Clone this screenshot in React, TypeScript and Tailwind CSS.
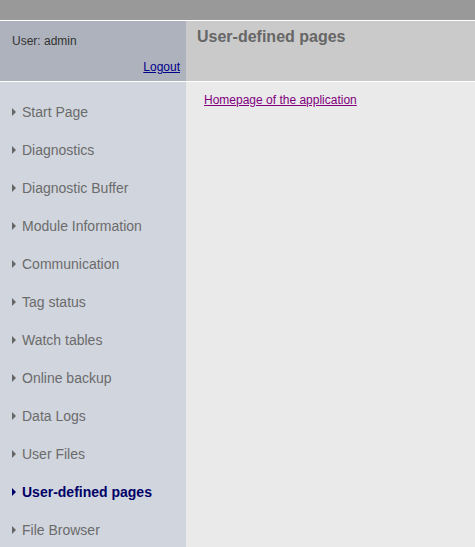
const items = [
  "Start Page",
  "Diagnostics",
  "Diagnostic Buffer",
  "Module Information",
  "Communication",
  "Tag status",
  "Watch tables",
  "Online backup",
  "Data Logs",
  "User Files",
  "User-defined pages",
  "File Browser",
];

const active = "User-defined pages";

function NavItem({ label }: { label: string }) {
  const isActive = label === active;
  return (
    <div className="flex items-center h-[38px] pl-[12px]">
      <span
        className={`w-0 h-0 border-y-[4px] border-y-transparent border-l-[4px] ${
          isActive ? "border-l-[#000066]" : "border-l-[#666666]"
        }`}
      />
      <a
        href="#"
        className={`ml-[6px] text-[14px] leading-[38px] ${
          isActive ? "text-[#000066] font-bold" : "text-[#6b6b6b]"
        }`}
      >
        {label}
      </a>
    </div>
  );
}

export default function App() {
  return (
    <div
      className="w-[475px] h-[547px] flex flex-col overflow-hidden bg-[#eaeaea]"
      style={{ fontFamily: '"Liberation Sans", Arial, sans-serif' }}
    >
      <div className="h-[21px] shrink-0 bg-[#999999] border-b border-white" />
      <div className="flex flex-1 min-h-0">
        <aside className="w-[186px] shrink-0 flex flex-col bg-[#d1d5de]">
          <div className="h-[61px] shrink-0 flex flex-col justify-between bg-[#aeb2bc] border-b border-white pt-[13px] pb-[3px] pl-[12px] pr-[6px]">
            <div className="text-[12px] leading-[14px] text-[#333333]">User: admin</div>
            <div className="text-right">
              <a href="#" className="text-[12px] leading-[14px] text-[#00008b] underline">
                Logout
              </a>
            </div>
          </div>
          <nav className="pt-[11px]">
            {items.map((label) => (
              <NavItem key={label} label={label} />
            ))}
          </nav>
        </aside>
        <main className="flex-1 flex flex-col">
          <div className="h-[61px] shrink-0 bg-[#cacaca] border-b border-white pt-[7px] pl-[11px]">
            <h1 className="text-[16px] leading-[18px] font-bold text-[#666666]">
              User-defined pages
            </h1>
          </div>
          <div className="pt-[5px] pl-[18px]">
            <a href="#" className="text-[12px] leading-[14px] text-[#800080] underline">
              Homepage of the application
            </a>
          </div>
        </main>
      </div>
    </div>
  );
}
